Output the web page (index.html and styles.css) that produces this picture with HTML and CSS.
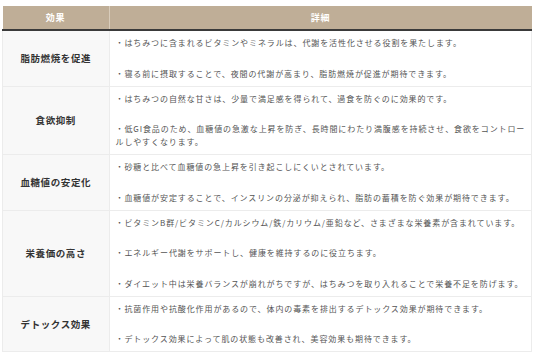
FILE: index.html
```html
<!DOCTYPE html>
<html lang="ja">
<head>
<meta charset="utf-8">
<link rel="stylesheet" href="styles.css">
</head>
<body>
<table class="tbl">
  <thead>
    <tr><th class="h-effect">効果</th><th>詳細</th></tr>
  </thead>
  <tbody>
    <tr>
      <td class="name">脂肪燃焼を促進</td>
      <td class="detail"><p>・はちみつに含まれるビタミンやミネラルは、代謝を活性化させる役割を果たします。</p><p>・寝る前に摂取することで、夜間の代謝が高まり、脂肪燃焼が促進が期待できます。</p></td>
    </tr>
    <tr>
      <td class="name">食欲抑制</td>
      <td class="detail"><p>・はちみつの自然な甘さは、少量で満足感を得られて、過食を防ぐのに効果的です。</p><p>・低GI食品のため、血糖値の急激な上昇を防ぎ、長時間にわたり満腹感を持続させ、食欲をコントロールしやすくなります。</p></td>
    </tr>
    <tr>
      <td class="name">血糖値の安定化</td>
      <td class="detail"><p>・砂糖と比べて血糖値の急上昇を引き起こしにくいとされています。</p><p>・血糖値が安定することで、インスリンの分泌が抑えられ、脂肪の蓄積を防ぐ効果が期待できます。</p></td>
    </tr>
    <tr>
      <td class="name">栄養価の高さ</td>
      <td class="detail"><p>・ビタミンB群/ビタミンC/カルシウム/鉄/カリウム/亜鉛など、さまざまな栄養素が含まれています。</p><p>・エネルギー代謝をサポートし、健康を維持するのに役立ちます。</p><p>・ダイエット中は栄養バランスが崩れがちですが、はちみつを取り入れることで栄養不足を防げます。</p></td>
    </tr>
    <tr>
      <td class="name">デトックス効果</td>
      <td class="detail"><p>・抗菌作用や抗酸化作用があるので、体内の毒素を排出するデトックス効果が期待できます。</p><p>・デトックス効果によって肌の状態も改善され、美容効果も期待できます。</p></td>
    </tr>
  </tbody>
</table>
</body>
</html>
```
FILE: styles.css
```css
html, body {
  margin: 0;
  padding: 0;
  background: #fff;
}
body {
  padding: 6px 4px 0 2px;
  font-family: "Noto Sans CJK JP", "Noto Sans", sans-serif;
  color: #444;
}
.tbl {
  width: 530px;
  border-collapse: collapse;
  table-layout: fixed;
}
.tbl th {
  background: #bfae97;
  color: #fff;
  font-size: 9px;
  font-weight: bold;
  letter-spacing: 0.8px;
  height: 23px;
  padding: 0;
  border-right: 1px solid #d8ccbb;
  border-bottom: 2px solid #3a3a3a;
}
.tbl th:last-child { border-right: none; }
.h-effect { width: 106px; }
.tbl td {
  border: 1px solid #ececec;
  vertical-align: middle;
}
.name {
  background: #f8f8f8;
  text-align: center;
  font-size: 9.5px;
  font-weight: bold;
  color: #333;
  letter-spacing: 0.6px;
}
.detail {
  padding: 5px 0 6px 6px;
  font-size: 8px;
  line-height: 13px;
  letter-spacing: 0.9px;
  color: #555;
}
.detail p {
  margin: 0;
}
.detail p + p {
  margin-top: 17.5px;
}
```
